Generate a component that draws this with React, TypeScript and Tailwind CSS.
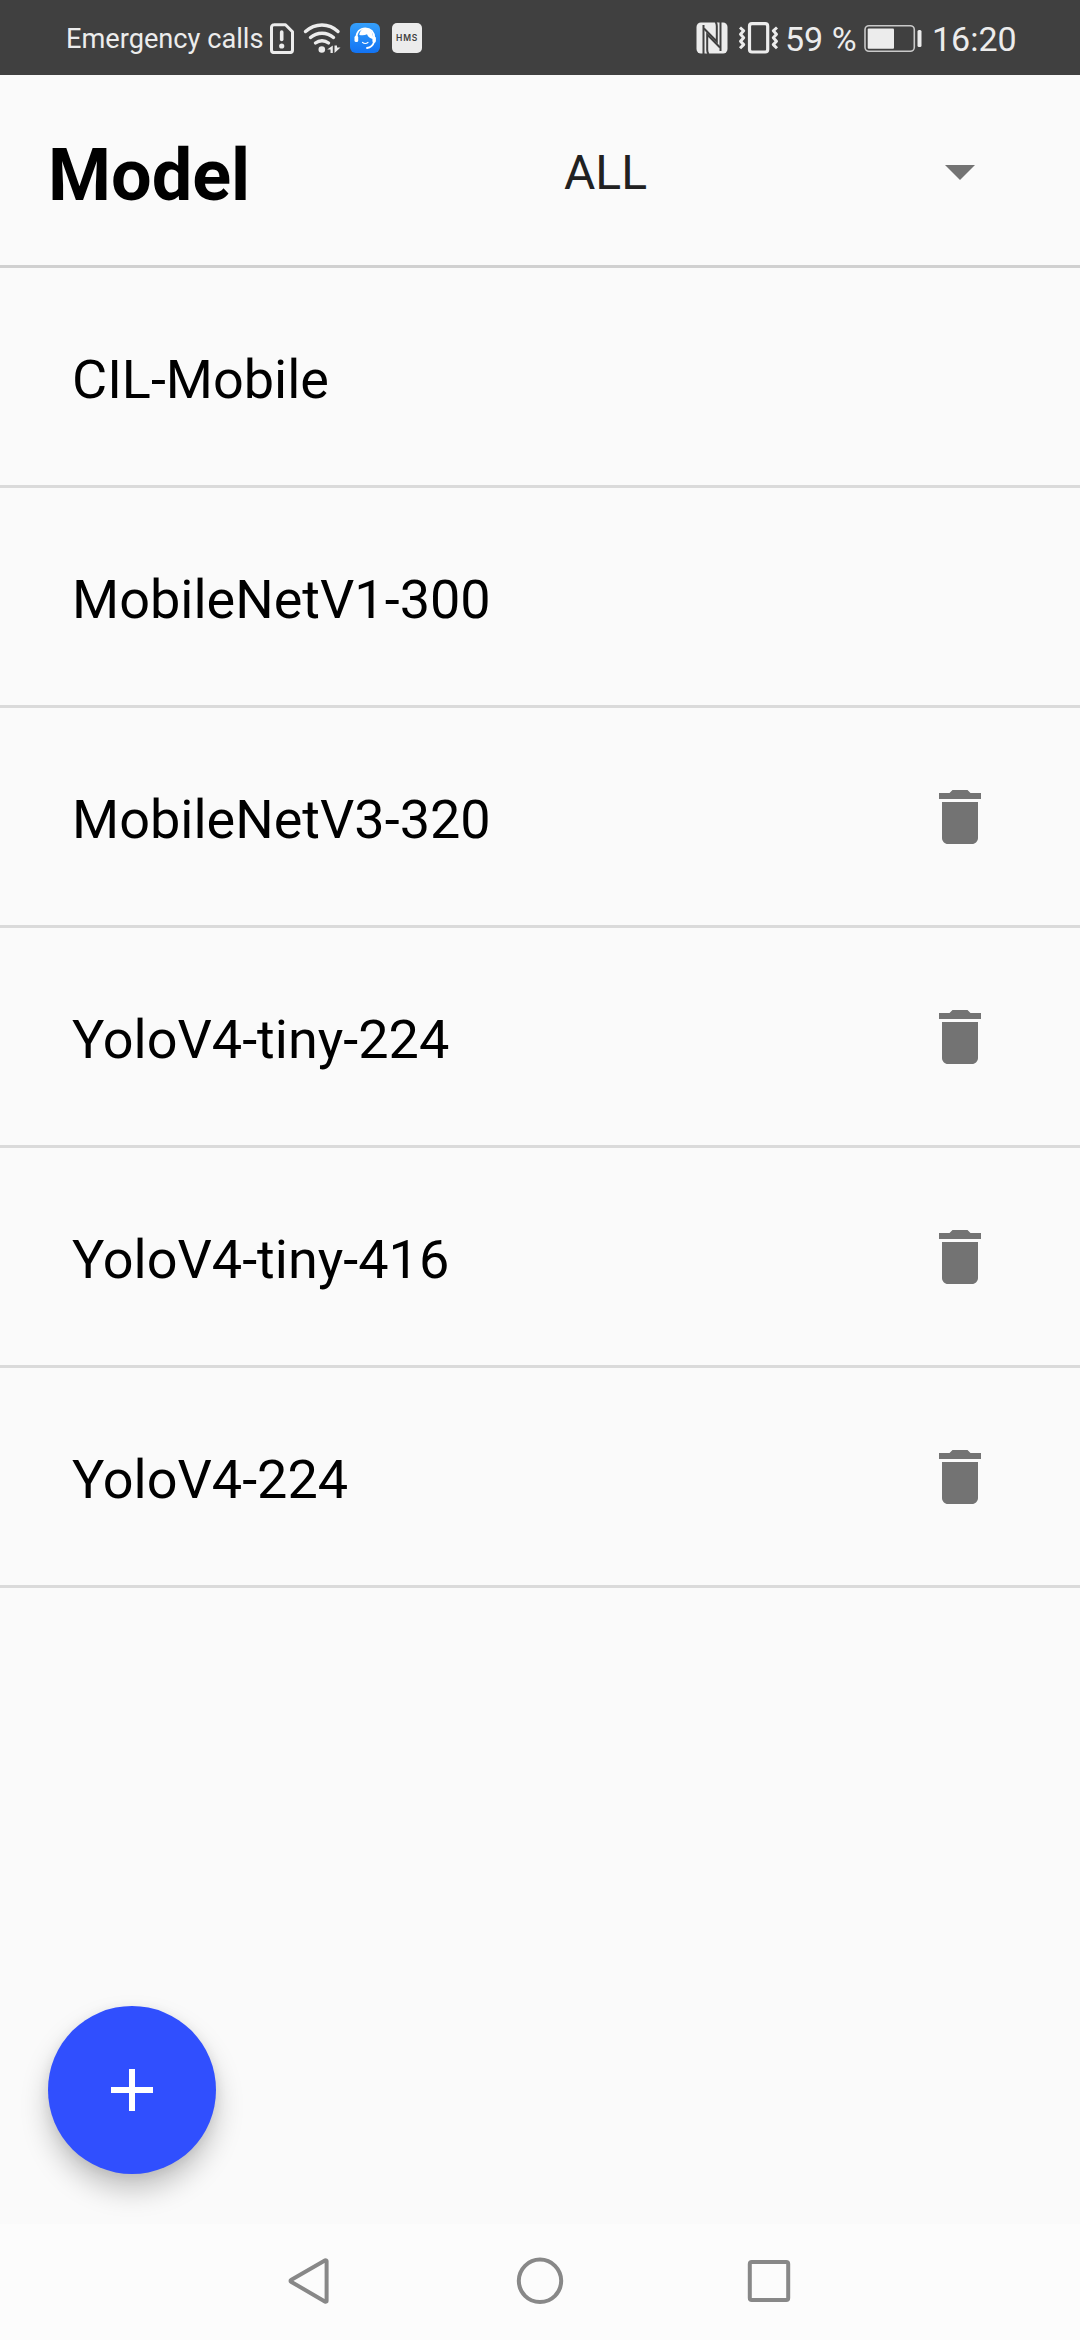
const MODELS = [
  { name: 'CIL-Mobile', removable: false },
  { name: 'MobileNetV1-300', removable: false },
  { name: 'MobileNetV3-320', removable: true },
  { name: 'YoloV4-tiny-224', removable: true },
  { name: 'YoloV4-tiny-416', removable: true },
  { name: 'YoloV4-224', removable: true },
];

function SimAlertIcon() {
  return (
    <svg className="ml-[6px] h-8 w-[26px] shrink-0" viewBox="269 21 26 32" fill="none">
      <path d="M274 23.7h11.500l7 7V49a2.600 2.600 0 0 1-2.600 2.600h-15.800a2.600 2.600 0 0 1-2.600-2.600V26.300a2.600 2.600 0 0 1 2.600-2.600z" stroke="#ececec" strokeWidth="3" strokeLinejoin="round" />
      <path d="M281.700 31v7.500" stroke="#ececec" strokeWidth="3.600" strokeLinecap="round" />
      <circle cx="281.700" cy="45" r="2.600" fill="#ececec" />
    </svg>
  );
}

function WifiIcon() {
  return (
    <svg className="ml-2 h-8 w-[38px] shrink-0" viewBox="303 21 38 32" fill="none">
      <g stroke="#ececec" strokeWidth="3.400" strokeLinecap="round">
        <path d="M305.500 30.500c9.500-8.700 23.500-8.700 32.500 0" />
        <path d="M310.500 36.500c6.500-5.700 16.500-5.700 23 0" />
        <path d="M315.500 42c3.800-3 9.200-3 13 0" />
      </g>
      <circle cx="321.800" cy="48.500" r="3.300" fill="#ececec" />
      <path d="M332.800 44.500v7.500h-2.300v-3.500h-3.300zM334.500 44.500v7.500l6-5.500h-3.500v-2z" fill="#ececec" />
    </svg>
  );
}

function AssistantIcon() {
  return (
    <svg className="ml-[9px] h-[30px] w-[30px] shrink-0" viewBox="0 0 30 30" fill="none">
      <defs>
        <linearGradient id="assistant" x1="0" y1="0" x2="0" y2="1">
          <stop offset="0" stopColor="#35a0fb" />
          <stop offset="1" stopColor="#1273f3" />
        </linearGradient>
      </defs>
      <rect width="30" height="30" rx="6" fill="url(#assistant)" />
      <path d="M6.300 15.500C6.300 9 10 5.300 15.300 5.300S24.300 9 24.300 15" stroke="#fff" strokeWidth="1.800" />
      <path d="M9.300 12C9.800 8 12 5.500 15.500 5.500c5 0 7.700 3.500 7.700 10.500-3-.3-5-2-6.200-4.800-2 1.200-4.700 1.500-7.700.8z" fill="#fff" />
      <rect x="4.500" y="12.800" width="3.700" height="6.200" rx="1.600" fill="#fff" />
      <rect x="22.400" y="13.500" width="3.500" height="6.200" rx="1.600" fill="#fff" />
      <path d="M24 19c-1 3.300-3.500 5.500-7 6" stroke="#fff" strokeWidth="1.800" strokeLinecap="round" />
      <path d="M12.500 19.300c1.500 1.500 4 1.500 5.500 0" stroke="#fff" strokeWidth="1.200" strokeLinecap="round" />
    </svg>
  );
}

function NfcIcon() {
  return (
    <svg className="h-8 w-8 shrink-0" viewBox="0 0 32 32">
      <rect x="0.500" y="0.500" width="31" height="31" rx="4.500" fill="#ececec" />
      <g fill="none" stroke="#404040" strokeWidth="2">
        <path d="M7.500 32V3" />
        <path d="M8 6.500L20.800 19.500V4C20.800 2.500 20.300 1 19.500 0" />
        <path d="M24.500 0v29" />
        <path d="M24 25.500L11.200 12.500V28c0 1.500.5 3 1.300 4" />
      </g>
    </svg>
  );
}

function VibrateIcon() {
  return (
    <svg className="ml-[9px] h-8 w-[42px] shrink-0" viewBox="737 21 42 32" fill="none" stroke="#ececec">
      <rect x="749.500" y="22.700" width="18.200" height="28.300" rx="2.500" strokeWidth="3.200" />
      <path d="M740 26.500l3.700 3.300-3.200 3.400 3.200 3.500-3.200 3.500 3.200 3.400-3.700 3.700" strokeWidth="3" strokeLinejoin="round" />
      <path d="M777 26.500l-3.700 3.300 3.200 3.400-3.200 3.500 3.200 3.500-3.200 3.400 3.700 3.700" strokeWidth="3" strokeLinejoin="round" />
    </svg>
  );
}

function BatteryIcon() {
  return (
    <svg className="h-8 w-[60px] shrink-0" viewBox="863 21 60 32">
      <rect x="865" y="24.700" width="49.300" height="25.600" rx="4" fill="none" stroke="#c9c9c9" strokeWidth="1.600" />
      <rect x="867.700" y="27.500" width="26.300" height="20.200" rx="1" fill="#ececec" />
      <rect x="917.500" y="29" width="4" height="17" rx="1.500" fill="#ececec" />
    </svg>
  );
}

function StatusBar() {
  return (
    <div className="flex h-[75px] shrink-0 items-center bg-[#404040] text-[#ececec]">
      <span className="ml-[66px] w-[197px] whitespace-nowrap pt-[4px] text-[27.200px] leading-none">Emergency calls</span>
      <SimAlertIcon />
      <WifiIcon />
      <AssistantIcon />
      <span className="ml-3 flex h-[30px] w-[30px] items-center justify-center rounded-[5px] bg-[#ececec] pt-[2px] font-['Inter',sans-serif] text-[8.500px] font-semibold leading-none tracking-[0.700px] text-[#404040]">
        HMS
      </span>
      <span className="ml-[274px] flex">
        <NfcIcon />
      </span>
      <VibrateIcon />
      <span className="ml-[6px] w-[78px] whitespace-nowrap pt-[2px] text-[34px] leading-none">59 %</span>
      <BatteryIcon />
      <span className="ml-[9px] whitespace-nowrap pt-[2px] text-[34px] leading-none">16:20</span>
    </div>
  );
}

function TrashIcon() {
  return (
    <svg className="h-[72px] w-[72px]" viewBox="0 0 24 24" fill="#737373">
      <path d="M6 19c0 1.100.9 2 2 2h8c1.100 0 2-.9 2-2V7H6v12zM19 4h-3.500l-1-1h-5l-1 1H5v2h14V4z" />
    </svg>
  );
}

export default function App() {
  return (
    <div className="relative flex h-[2340px] w-[1080px] flex-col overflow-hidden bg-[#fafafa] font-['Roboto',sans-serif] text-black">
      <StatusBar />
      <header className="flex h-[193px] shrink-0 border-b-[3px] border-[#d0d0d0]">
        <h1 className="w-[516px] pl-12 pt-[64px] text-[72px] font-bold leading-[73px]">Model</h1>
        <button className="mt-[60px] flex h-[72px] w-[480px] items-center justify-between pl-[48px] text-left text-[48px] leading-[57px] text-[#212121]">
          <span className="pt-[3px]">ALL</span>
          <svg className="h-[72px] w-[72px]" viewBox="0 0 24 24" fill="#737373">
            <path d="M7 10l5 5 5-5z" />
          </svg>
        </button>
      </header>
      <ul className="flex-1">
        {MODELS.map((model) => (
          <li key={model.name} className="flex h-[220px] items-center justify-between border-b-[3px] border-[#dadada] pl-[72px] pr-[84px] text-[54px] leading-[64px]">
            <span className="pt-[6px]">{model.name}</span>
            {model.removable && (
              <button aria-label="Delete">
                <TrashIcon />
              </button>
            )}
          </li>
        ))}
      </ul>
      <button
        aria-label="Add model"
        className="absolute bottom-[166px] left-12 flex h-[168px] w-[168px] items-center justify-center rounded-full bg-[#304ffe] shadow-[0_16px_28px_rgba(0,0,0,0.22),0_3px_12px_rgba(0,0,0,0.08)]"
      >
        <svg className="h-[72px] w-[72px]" viewBox="0 0 24 24" fill="#fff">
          <path d="M19 13h-6v6h-2v-6H5v-2h6V5h2v6h6v2z" />
        </svg>
      </button>
      <nav className="flex h-[116px] shrink-0 items-center bg-[#fcfcfc] pb-[2px] pl-[285px]">
        <svg className="h-[50px] w-[46px]" viewBox="285 2256 46 50" fill="none" stroke="#888" strokeWidth="4" strokeLinejoin="round">
          <path d="M325.300 2260.300a.9.900 0 0 1 1.300.8v39.800a.9.900 0 0 1-1.300.8l-34.300-20a.9.900 0 0 1 0-1.600z" />
        </svg>
        <svg className="ml-[184px] h-[50px] w-[50px]" viewBox="0 0 50 50" fill="none" stroke="#888" strokeWidth="4">
          <circle cx="25" cy="24.800" r="21.200" />
        </svg>
        <svg className="ml-[180px] h-[50px] w-[48px]" viewBox="745 2256 48 50" fill="none" stroke="#888" strokeWidth="4">
          <rect x="749.800" y="2262" width="38.400" height="38" rx="2" />
        </svg>
      </nav>
    </div>
  );
}
